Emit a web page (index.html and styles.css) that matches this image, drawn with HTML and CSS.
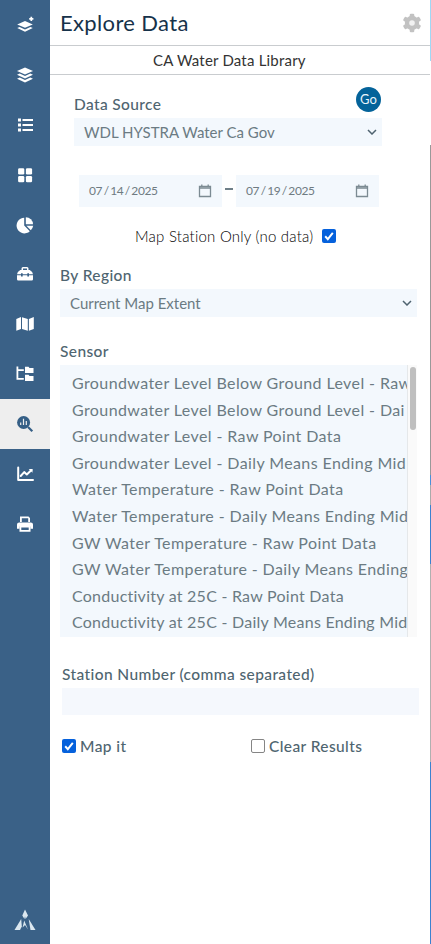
FILE: index.html
```html
<!DOCTYPE html>
<html lang="en">
<head>
<meta charset="utf-8">
<title>Explore Data</title>
<link rel="stylesheet" href="styles.css">
</head>
<body>
<div class="app">
  <nav class="rail">
    <a class="rail-item"><svg viewBox="0 0 20 20"><path d="M10 6.1 17.8 9.4 10 12.8 2.2 9.4z"/><path d="M2.2 12.2 4.6 11.2 10 13.6l5.4-2.4 2.4 1L10 15.9z" transform="translate(0 .9)"/><path d="M14.2 3.9h4.2M16.3 1.8V6" stroke="#fff" stroke-width="1.7"/></svg></a>
    <a class="rail-item"><svg viewBox="0 0 20 20"><path d="M10 2.500 18 6 10 9.500 2 6z"/><path d="M2 9.800 4.700 8.600 10 11l5.300-2.400L18 9.800l-8 3.600z"/><path d="M2 13.700 4.700 12.500 10 14.900l5.300-2.400 2.700 1.200-8 3.800z"/></svg></a>
    <a class="rail-item"><svg viewBox="0 0 20 20"><path d="M3 3.5h3v3H3zM3 8.5h3v3H3zM3 13.5h3v3H3zM7.5 4H18v2.1H7.5zM7.5 9H18v2.1H7.5zM7.5 14H18v2.1H7.5z"/></svg></a>
    <a class="rail-item"><svg viewBox="0 0 20 20"><rect x="3.1" y="3.3" width="6.2" height="6.2" rx="1.3"/><rect x="10.9" y="3.3" width="6.2" height="6.2" rx="1.3"/><rect x="3.1" y="11" width="6.2" height="6.2" rx="1.3"/><rect x="10.9" y="11" width="6.2" height="6.2" rx="1.3"/></svg></a>
    <a class="rail-item"><svg viewBox="0 0 20 20"><path d="M9.2 2.8V10.6L14.8 16.2A7.8 7.8 0 1 1 9.2 2.8z"/><path d="M10.8 2.2A7.2 7.2 0 0 1 18 9.3H10.8z"/><path d="M11.4 10.8H18.2A7.4 7.4 0 0 1 15.8 15.2z"/></svg></a>
    <a class="rail-item"><svg viewBox="0 0 20 20"><path d="M6.500 6V4.600Q6.500 3 8 3h4q1.500 0 1.500 1.600V6h1.300q3.200 2 3.200 4.300H14V9.200h-1.700v1.100H7.700V9.200H6v1.100H2Q2 8 5.200 6zM8 6h4V4.400H8z" fill-rule="evenodd"/><path d="M2 11.300h4v1.200h1.700v-1.200h4.600v1.200H14v-1.200h4v3.900q0 1.300-1.300 1.300H3.300Q2 16.500 2 15.200z"/></svg></a>
    <a class="rail-item"><svg viewBox="0 0 20 20"><path d="M1.300 4.900 6 3.100V15L1.300 16.700zM7 3.200l5.800 1.700V16.700L7 15zM13.900 4.900 18.800 3.100V14.900L13.900 16.700z"/></svg></a>
    <a class="rail-item"><svg viewBox="0 0 20 20"><path d="M1.500 2.500h1.800v2.700h5.500V7H3.300v6.900h5.500v1.800H1.500z"/><path d="M10 2.700h3.500l1 1.200h4v5H10zM10 10.800h3.500l1 1.200h4v5H10z"/></svg></a>
    <a class="rail-item active"><svg viewBox="0 0 20 20"><circle cx="8.600" cy="8.500" r="6.500"/><path d="M13 13 17.300 17.200" stroke="#355f86" stroke-width="2.200"/><path d="M5.700 8.500v2.500M8.500 4.800V11M11.300 7v4" stroke="#eee" stroke-width="1.200"/></svg></a>
    <a class="rail-item"><svg viewBox="0 0 20 20" class="line"><path d="M3.200 3.500V15.900H18"/><path d="m5.700 12 3.500-3.900 2.600 2.400L16.500 6"/><path d="M13.700 5h3.800v3.800z" fill="#fff" stroke="none"/></svg></a>
    <a class="rail-item"><svg viewBox="0 0 20 20"><path d="M5 2.500h8.500L15 4v4h-1.800V4.300H6.800V8H5z"/><path fill-rule="evenodd" d="M4.200 8.600h11.600Q18 8.600 18 10.500v4.300h-2.600V12.500H4.600v2.300H2v-4.300Q2 8.600 4.200 8.600z"/><path fill-rule="evenodd" d="M4.500 12h11v5.700h-11zM6.300 13.400v2.500h7.400v-2.500z"/></svg></a>
    <a class="rail-logo"><svg viewBox="0 0 24 24"><path d="M12 1.500 15 7.600 12.600 11 12 8.200 11.400 11 9.300 7.600z"/><path d="M8.200 11 8.800 18.500 7 22H1.500z"/><path d="M9.600 19.500 11.200 12.500 15 21.500 12 17z"/><path d="M15.700 11 22.500 22H17.500z"/></svg></a>
  </nav>
  <main class="panel">
    <header class="head"><h1>Explore Data</h1>
      <svg class="gear" viewBox="0 0 20 20"><g fill="#c2c2c2"><circle cx="10" cy="10" r="7.200"/><rect x="7.700" y=".7" width="4.600" height="18.600" rx="1.200"/><rect x="7.700" y=".7" width="4.600" height="18.600" rx="1.200" transform="rotate(60 10 10)"/><rect x="7.700" y=".7" width="4.600" height="18.600" rx="1.200" transform="rotate(120 10 10)"/></g><circle cx="10" cy="10" r="2.800" fill="#f1f1f1"/></svg>
    </header>
    <div class="subhead"><span>CA Water Data Library</span></div>
    <section class="source">
      <div class="source-top"><span class="label">Data Source</span><button class="go">Go</button></div>
      <div class="select"><span>WDL HYSTRA Water Ca Gov</span><svg class="chev" viewBox="0 0 10 6"><path d="m1 1 4 4 4-4"/></svg></div>
    </section>
    <div class="dates">
      <div class="date"><span>07 / 14 / 2025</span><svg viewBox="0 0 14 14"><path d="M1.500 2.500h11v10h-11z"/><path d="M1.500 4h11M3.800 .5v2M10.200 .5v2"/></svg></div>
      <i class="dash"></i>
      <div class="date"><span>07 / 19 / 2025</span><svg viewBox="0 0 14 14"><path d="M1.500 2.500h11v10h-11z"/><path d="M1.500 4h11M3.800 .5v2M10.200 .5v2"/></svg></div>
    </div>
    <div class="only"><span>Map Station Only (no data)</span><i class="box on"><svg viewBox="0 0 14 14"><path d="m3.200 7.300 2.600 2.800 5-6.200"/></svg></i></div>
    <section class="region">
      <div class="label">By Region</div>
      <div class="select"><span>Current Map Extent</span><svg class="chev" viewBox="0 0 10 6"><path d="m1 1 4 4 4-4"/></svg></div>
    </section>
    <section class="sensor">
      <div class="label">Sensor</div>
      <div class="list">
        <ul>
          <li>Groundwater Level Below Ground Level - Raw</li>
          <li>Groundwater Level Below Ground Level - Dai</li>
          <li>Groundwater Level - Raw Point Data</li>
          <li>Groundwater Level - Daily Means Ending Mid</li>
          <li>Water Temperature - Raw Point Data</li>
          <li>Water Temperature - Daily Means Ending Mid</li>
          <li>GW Water Temperature - Raw Point Data</li>
          <li>GW Water Temperature - Daily Means Ending</li>
          <li class="tight">Conductivity at 25C - Raw Point Data</li>
          <li class="tight">Conductivity at 25C - Daily Means Ending Mid</li>
        </ul>
        <div class="track"><div class="thumb"></div></div>
      </div>
    </section>
    <section class="station">
      <div class="label">Station Number (comma separated)</div>
      <div class="input"></div>
    </section>
    <div class="checks">
      <div class="check"><i class="box on"><svg viewBox="0 0 14 14"><path d="m3.200 7.300 2.600 2.800 5-6.200"/></svg></i><span class="label">Map it</span></div>
      <div class="check"><i class="box"></i><span class="label">Clear Results</span></div>
    </div>
  </main>
  <div class="edge"></div>
</div>
</body>
</html>
```

FILE: styles.css
```css
* { box-sizing: border-box; }
body { margin: 0; background: #fff; font-family: Lato, "Liberation Sans", sans-serif; font-variant-ligatures: none; }
.app { display: flex; width: 431px; height: 944px; overflow: hidden; }

.rail { width: 50px; background: #3a6187; display: flex; flex-direction: column; flex: none; }
.rail-item { height: 49.900px; display: flex; align-items: center; justify-content: center; }
.rail-item svg { width: 20px; height: 20px; fill: #fff; }
.rail-item svg.line { fill: none; stroke: #fff; stroke-width: 2; stroke-linecap: round; stroke-linejoin: round; }
.rail-item.active { background: #eee; }
.rail-item.active svg { fill: #355f86; }
.rail-logo { margin-top: auto; height: 48px; display: flex; justify-content: center; }
.rail-logo svg { width: 24px; height: 24px; margin-top: 12px; fill: #dce8f0; }

.panel { width: 380px; flex: none; }
.head { height: 46px; border-bottom: 1px solid #c9cccf; display: flex; justify-content: space-between; align-items: center; padding: 0 8px 0 10px; }
h1 { margin: 0; font-size: 22px; font-weight: 400; color: #16324a; letter-spacing: .35px; line-height: 45px; white-space: nowrap; }
.gear { width: 20px; height: 20px; }
.subhead { height: 29px; border-bottom: 1px solid #c9cccf; font-size: 15px; letter-spacing: .2px; line-height: 28px; color: #333; padding-left: 103px; white-space: nowrap; }
.label { color: #4f6570; font-size: 15.500px; font-weight: 500; line-height: 20px; letter-spacing: .4px; white-space: nowrap; }
.source { padding: 12px 0 0 24px; }
.source-top { display: flex; justify-content: space-between; width: 307px; height: 31px; }
.source-top .label { margin-top: 7px; letter-spacing: .36px; }
.go { width: 25px; height: 25px; border: 0; border-radius: 50%; background: #04639a; color: #e8f4fb; font: 400 13px/25px Lato, sans-serif; padding: 0; }
.select { width: 308px; height: 28px; background: #f3f8fd; display: flex; justify-content: space-between; align-items: center; padding: 0 5px 0 10px; color: #6b7b83; font-size: 15px; white-space: nowrap; }
.chev { width: 10px; height: 6px; fill: none; stroke: #4f6370; stroke-width: 1.500; }
.dates { display: flex; padding: 29px 0 0 29px; align-items: flex-start; }
.date { width: 143px; height: 32px; background: #f3f8fd; display: flex; justify-content: space-between; align-items: center; padding: 0 10px; color: #6f7b82; font-size: 12px; letter-spacing: -.35px; word-spacing: -1.300px; line-height: 30px; white-space: nowrap; }
.date svg { width: 14px; height: 14px; fill: none; stroke: #7c8b93; stroke-width: 1.300; }
.dash { width: 8px; height: 2px; background: #6f7f88; margin: 13px 3px 0; }
.only { display: flex; align-items: center; height: 20px; margin: 19px 0 0 85px; gap: 9px; }
.only span { font-size: 15px; font-weight: 300; letter-spacing: .23px; color: #000; white-space: nowrap; }
.box { width: 14px; height: 14px; border: 1px solid #858585; border-radius: 2px; display: block; flex: none; background: #fff; }
.box.on { border: 0; background: #0561dc; }
.box svg { display: block; width: 14px; height: 14px; fill: none; stroke: #fff; stroke-width: 2; }
.region { padding: 19px 0 0 10px; }
.region .label, .sensor .label { height: 24px; }
.region .select, .list { width: 357px; }
.sensor { padding: 24px 0 0 10px; }
.list { height: 272px; display: flex; background: #f3f8fd; }
ul { list-style: none; margin: 0; padding: 5px 0 0 12px; width: 347px; overflow: hidden; }
li { height: 26.600px; line-height: 26.600px; font-size: 16px; color: #6b7b83; white-space: nowrap; letter-spacing: .4px; }
li.tight { letter-spacing: .25px; }
.track { width: 10px; background: #fafafa; border-left: 1px solid #e5e8ea; padding: 2px 1px 0 2px; }
.thumb { width: 6px; height: 63px; border-radius: 3px; background: #bfbfbf; }
.station { padding: 27px 0 0 12px; }
.station .label { height: 24px; }
.input { width: 357px; height: 27px; background: #f5f8fd; }
.checks { display: flex; padding: 21px 0 0 12px; }
.check { width: 179px; display: flex; align-items: center; gap: 4px; }
.check:first-child { width: 189px; }
.edge { width: 1px; background: linear-gradient(#9fd8f5 0 61px, #fff 61px 145px, #999 145px 475px, #4a90d9 475px 485px, #aaa 485px 505px, #3b82d0 505px 564px, #b0b0b0 564px 762px, #3b82d0 762px); }
```
